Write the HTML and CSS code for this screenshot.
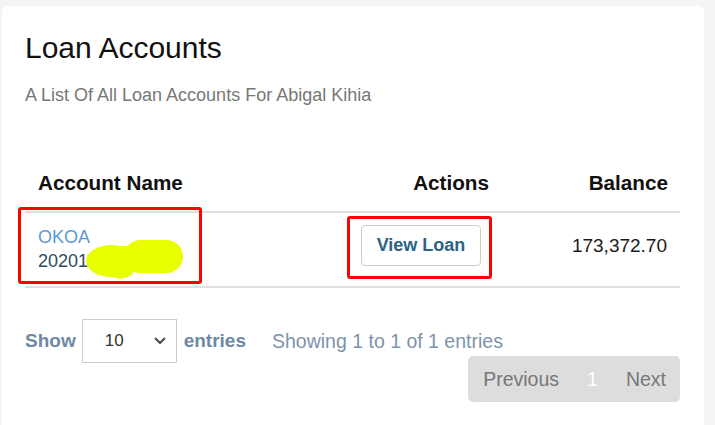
FILE: index.html
```html
<!DOCTYPE html>
<html lang="en">
<head>
<meta charset="utf-8">
<title>Loan Accounts</title>
<link rel="stylesheet" href="styles.css">
</head>
<body>
<div class="page">
  <div class="card">
    <h2 class="title">Loan Accounts</h2>
    <p class="subtitle">A List Of All Loan Accounts For Abigal Kihia</p>
    <table class="loans">
      <colgroup>
        <col class="c-name">
        <col class="c-actions">
        <col class="c-balance">
      </colgroup>
      <thead>
        <tr>
          <th class="left">Account Name</th>
          <th class="right">Actions</th>
          <th class="right">Balance</th>
        </tr>
      </thead>
      <tbody>
        <tr>
          <td class="left">
            <a class="acct-link" href="#">OKOA</a>
            <div class="acct-no">20201</div>
          </td>
          <td class="right"><button class="btn-view" type="button">View Loan</button></td>
          <td class="right balance">173,372.70</td>
        </tr>
      </tbody>
    </table>
    <div class="footer">
      <div class="footer-row">
        <span class="len-label">Show</span>
        <div class="select">
          <span class="select-val">10</span>
          <svg class="chev" width="12" height="8" viewBox="0 0 12 8"><path d="M1.5 1.5 L6 6 L10.5 1.5" fill="none" stroke="#444" stroke-width="1.8" stroke-linecap="round" stroke-linejoin="round"/></svg>
        </div>
        <span class="len-label">entries</span>
        <span class="info">Showing 1 to 1 of 1 entries</span>
      </div>
      <div class="pager-row">
        <div class="pager">
          <span class="pg">Previous</span>
          <span class="pg current">1</span>
          <span class="pg">Next</span>
        </div>
      </div>
    </div>
  </div>
</div>
<div class="mark mark-name"></div>
<div class="mark mark-action"></div>
<svg class="blur" width="97" height="39" viewBox="0 0 97 39">
  <g fill="#e9ff00">
    <ellipse cx="25" cy="21" rx="25" ry="16"/>
    <rect x="38" y="0" width="59" height="33" rx="16.5"/>
    <ellipse cx="34" cy="30" rx="14" ry="8.5"/>
    <rect x="20" y="6" width="40" height="26"/>
  </g>
</svg>
</body>
</html>
```

FILE: styles.css
```css
html, body {
  margin: 0;
  padding: 0;
}
body {
  background: #f5f5f5;
  font-family: "Liberation Sans", Arial, sans-serif;
  position: relative;
  height: 425px;
  overflow: hidden;
}
.page {
  padding: 6px 11px 0 2px;
}
.card {
  background: #fff;
  border-radius: 6px 6px 0 0;
  padding: 25px 24px 0 23px;
  height: 419px;
  box-sizing: border-box;
}
.title {
  margin: 0;
  font-size: 30px;
  line-height: 33px;
  font-weight: normal;
  color: #111;
}
.subtitle {
  margin: 20px 0 0 0;
  font-size: 18px;
  line-height: 22px;
  color: #777;
}
.loans {
  margin-top: 56px;
  width: 655px;
  border-collapse: collapse;
  table-layout: fixed;
}
.c-name { width: 276px; }
.c-actions { width: 200px; }
.c-balance { width: 179px; }
.loans th {
  font-size: 20.7px;
  line-height: 26px;
  font-weight: bold;
  color: #111;
  padding: 8px 12px 15px 13px;
  border-bottom: 2px solid #dfdfdf;
}
.loans td {
  padding: 12px 13px 13px 13px;
  vertical-align: top;
  border-bottom: 2px solid #dfdfdf;
}
.left { text-align: left; }
.right { text-align: right; }
.acct-link {
  display: block;
  font-size: 18px;
  line-height: 24px;
  color: #5b9bd3;
  text-decoration: none;
}
.acct-no {
  font-size: 18px;
  line-height: 24px;
  color: #2f4a5c;
}
.btn-view {
  width: 120px;
  height: 41px;
  margin-right: 7px;
  background: #fff;
  border: 1px solid #ccc;
  border-radius: 4px;
  font-family: "Liberation Sans", Arial, sans-serif;
  font-size: 18px;
  font-weight: bold;
  color: #2b6385;
  padding: 0;
}
.balance {
  font-size: 19px;
  line-height: 41px;
  color: #1a1a1a;
}
.footer {
  margin-top: 31px;
  width: 655px;
}
.footer-row {
  display: flex;
  align-items: center;
  height: 44px;
}
.len-label {
  font-size: 19px;
  font-weight: bold;
  color: #6f88a3;
}
.select {
  display: flex;
  align-items: center;
  justify-content: space-between;
  box-sizing: border-box;
  width: 95px;
  height: 44px;
  margin: 0 7px 0 6px;
  padding: 0 10px 0 22px;
  border: 1px solid #ccc;
  background: #fff;
}
.select-val {
  font-size: 17px;
  color: #333;
}
.chev {
  display: block;
}
.info {
  margin-left: 26px;
  font-size: 19.5px;
  color: #7d93ac;
}
.pager-row {
  display: flex;
  justify-content: flex-end;
  margin-top: -7px;
}
.pager {
  display: flex;
  align-items: center;
  height: 46px;
  background: #dddddd;
  border-radius: 5px;
  padding: 0;
}
.pg {
  font-size: 19.5px;
  color: #777;
  padding: 0 14px;
}
.pg:first-child {
  padding-left: 15px;
}
.current {
  color: #fff;
}
.mark {
  position: absolute;
  box-sizing: border-box;
  border: 3px solid #ff0000;
  border-radius: 3px;
}
.mark-name {
  left: 18px;
  top: 207px;
  width: 184px;
  height: 77px;
}
.mark-action {
  left: 347px;
  top: 216px;
  width: 145px;
  height: 63px;
}
.blur {
  position: absolute;
  left: 86px;
  top: 240px;
}
```
